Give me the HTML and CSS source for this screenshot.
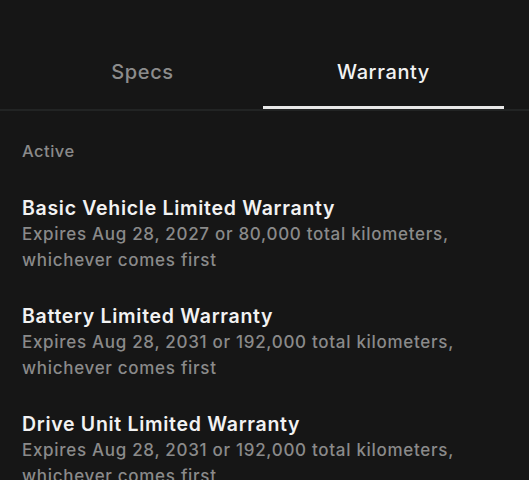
FILE: index.html
```html
<!DOCTYPE html>
<html lang="en">
<head>
    <meta charset="UTF-8">
    <meta name="viewport" content="width=device-width, initial-scale=1.0">
    <title>Warranty</title>
    <link rel="stylesheet" href="styles.css">
</head>
<body>
    <!-- Tabs -->
    <div class="tabs">
        <div class="tab">Specs</div>
        <div class="tab active">Warranty</div>
    </div>

    <div class="content">
        <div class="section-label">Active</div>

        <div class="warranty">
            <div class="warranty-title">Basic Vehicle Limited Warranty</div>
            <div class="warranty-desc">Expires Aug 28, 2027 or 80,000 total kilometers, whichever comes first</div>
        </div>

        <div class="warranty">
            <div class="warranty-title">Battery Limited Warranty</div>
            <div class="warranty-desc">Expires Aug 28, 2031 or 192,000 total kilometers, whichever comes first</div>
        </div>

        <div class="warranty">
            <div class="warranty-title">Drive Unit Limited Warranty</div>
            <div class="warranty-desc">Expires Aug 28, 2031 or 192,000 total kilometers, whichever comes first</div>
        </div>
    </div>
</body>
</html>
```

FILE: styles.css
```css
body {
    font-family: 'Inter', 'Liberation Sans', sans-serif;
    background-color: #161616;
    color: #f0f0f0;
    margin: 0;
    overflow: hidden;
}

/* Tabs */
.tabs {
    display: flex;
    padding: 60px 25px 0 22px;
    border-bottom: 2px solid #222424;
}

.tab {
    flex: 1;
    text-align: center;
    font-size: 20px;
    font-weight: 500;
    letter-spacing: 0.6px;
    line-height: 24px;
    color: #8c8c8c;
    padding-bottom: 22px;
    border-bottom: 3px solid transparent;
}

.tab.active {
    color: #f2f2f2;
    border-bottom-color: #e8e8e8;
}

/* Warranty list */
.content {
    padding: 0 22px;
}

.section-label {
    margin-top: 28px;
    font-size: 16.5px;
    font-weight: 500;
    letter-spacing: 0.5px;
    line-height: 24px;
    color: #8a8a8a;
}

.warranty {
    margin-top: 30px;
}

.section-label + .warranty {
    margin-top: 32px;
}

.warranty-title {
    font-size: 19.5px;
    font-weight: 600;
    letter-spacing: 0.7px;
    line-height: 26px;
    color: #f2f2f2;
}

.warranty-desc {
    font-size: 17px;
    font-weight: 500;
    letter-spacing: 0.7px;
    line-height: 26px;
    color: #8a8a8a;
    max-width: 460px;
}
```
